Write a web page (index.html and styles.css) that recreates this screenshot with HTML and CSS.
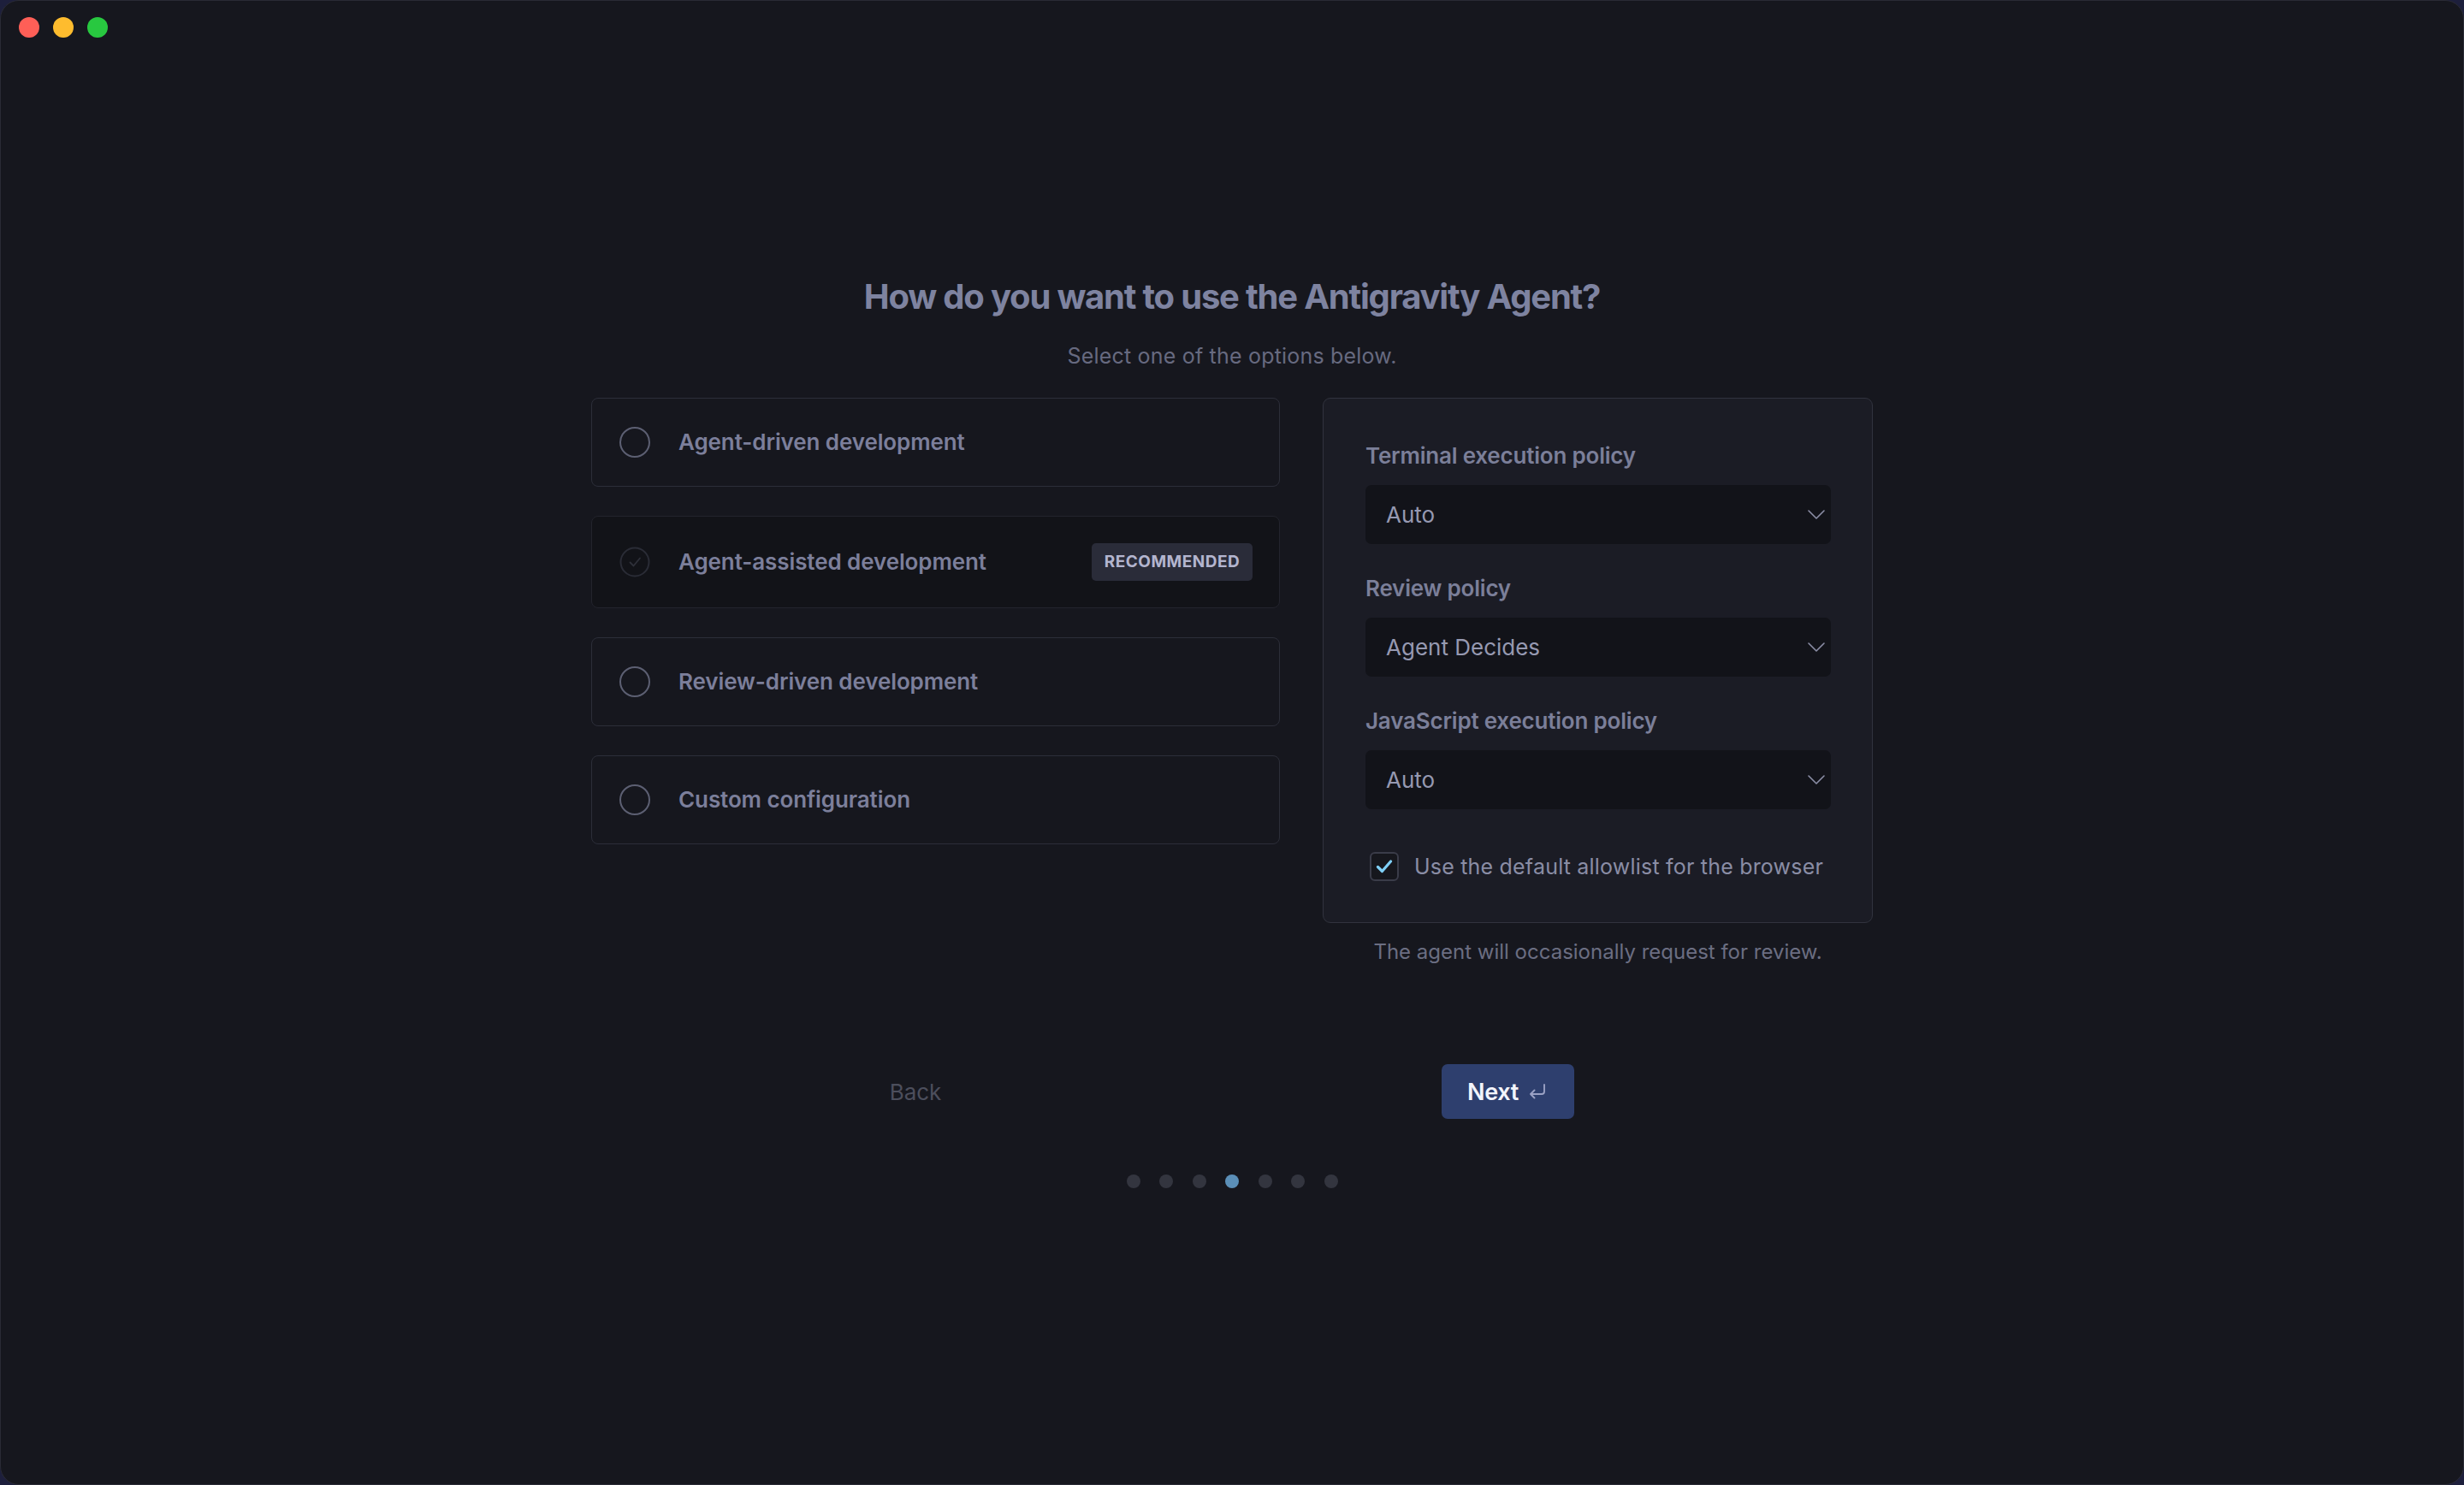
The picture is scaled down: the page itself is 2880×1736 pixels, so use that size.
FILE: index.html
```html
<!DOCTYPE html>
<html lang="en">
<head>
<meta charset="utf-8">
<title>Antigravity Agent</title>
<link rel="stylesheet" href="styles.css">
</head>
<body>
<div class="window">
  <div class="titlebar">
    <span class="light red"></span>
    <span class="light yellow"></span>
    <span class="light green"></span>
  </div>
  <main class="main">
    <h1 class="title">How do you want to use the Antigravity Agent?</h1>
    <p class="subtitle">Select one of the options below.</p>
    <div class="content">
      <div class="options">
        <div class="option">
          <span class="radio"></span>
          <span class="option-label">Agent-driven development</span>
        </div>
        <div class="option option-selected">
          <span class="radio radio-check">
            <svg viewBox="0 0 36 36" width="36" height="36"><circle cx="18" cy="18" r="16.5" fill="none" stroke="#2a2c36" stroke-width="2"/><path d="M12.5 18.5 l4 4 l7.5 -9" fill="none" stroke="#2e3039" stroke-width="1.8" stroke-linecap="round" stroke-linejoin="round"/></svg>
          </span>
          <span class="option-label">Agent-assisted development</span>
          <span class="badge">RECOMMENDED</span>
        </div>
        <div class="option">
          <span class="radio"></span>
          <span class="option-label">Review-driven development</span>
        </div>
        <div class="option">
          <span class="radio"></span>
          <span class="option-label">Custom configuration</span>
        </div>
      </div>
      <div class="side">
        <div class="panel">
          <div class="field">
            <div class="field-label">Terminal execution policy</div>
            <div class="select"><span>Auto</span><svg class="chev" viewBox="0 0 20 11" width="20" height="11"><path d="M1 1 L10 10 L19 1" fill="none" stroke="#8b8ea6" stroke-width="1.6" stroke-linecap="round" stroke-linejoin="round"/></svg></div>
          </div>
          <div class="field">
            <div class="field-label">Review policy</div>
            <div class="select"><span>Agent Decides</span><svg class="chev" viewBox="0 0 20 11" width="20" height="11"><path d="M1 1 L10 10 L19 1" fill="none" stroke="#8b8ea6" stroke-width="1.6" stroke-linecap="round" stroke-linejoin="round"/></svg></div>
          </div>
          <div class="field">
            <div class="field-label">JavaScript execution policy</div>
            <div class="select"><span>Auto</span><svg class="chev" viewBox="0 0 20 11" width="20" height="11"><path d="M1 1 L10 10 L19 1" fill="none" stroke="#8b8ea6" stroke-width="1.6" stroke-linecap="round" stroke-linejoin="round"/></svg></div>
          </div>
          <label class="check-row">
            <span class="checkbox"><svg viewBox="0 0 24 24" width="24" height="24"><path d="M4.5 12.5 L9.5 17.5 L19.5 6" fill="none" stroke="#7fd0f7" stroke-width="3.2" stroke-linecap="round" stroke-linejoin="round"/></svg></span>
            <span class="check-text">Use the default allowlist for the browser</span>
          </label>
        </div>
        <p class="helper">The agent will occasionally request for review.</p>
      </div>
    </div>
    <div class="actions">
      <button class="btn btn-back">Back</button>
      <button class="btn btn-next">Next<svg class="enter" viewBox="0 0 24 20" width="24" height="20"><path d="M20 2 V10 a3 3 0 0 1 -3 3 H4 M8.5 8.5 L4 13 L8.5 17.5" fill="none" stroke="#9aa1c4" stroke-width="1.9" stroke-linecap="round" stroke-linejoin="round"/></svg></button>
    </div>
    <div class="dots">
      <span class="dot"></span>
      <span class="dot"></span>
      <span class="dot"></span>
      <span class="dot dot-active"></span>
      <span class="dot"></span>
      <span class="dot"></span>
      <span class="dot"></span>
    </div>
  </main>
</div>
</body>
</html>
```

FILE: styles.css
```css
* { box-sizing: border-box; }

html, body {
  margin: 0;
  padding: 0;
  background: #1d1f3c;
}

body {
  font-family: Inter, "Noto Sans", "Liberation Sans", sans-serif;
  width: 2880px;
  height: 1736px;
  overflow: hidden;
}

.window {
  width: 2880px;
  height: 1736px;
  background: #16171e;
  border-radius: 22px;
  border: 1px solid #2a2b35;
  overflow: hidden;
}

.titlebar {
  display: flex;
  gap: 16px;
  padding: 19px 21px;
  height: 63px;
}

.light {
  width: 24px;
  height: 24px;
  border-radius: 50%;
  display: block;
}
.red { background: #fe5f57; }
.yellow { background: #febc2e; }
.green { background: #28c840; }

.main {
  display: flex;
  flex-direction: column;
  align-items: center;
  padding-top: 259px;
}

.title {
  margin: 0;
  font-size: 40px;
  line-height: 48px;
  font-weight: 700;
  letter-spacing: -1.2px;
  color: #7e83a0;
}

.subtitle {
  margin: 29px 0 0;
  font-size: 25px;
  line-height: 32px;
  font-weight: 400;
  letter-spacing: 0.2px;
  color: #676a80;
}

.content {
  margin-top: 33px;
  display: grid;
  grid-template-columns: 805px 643px;
  column-gap: 50px;
  align-items: start;
}

.options {
  display: flex;
  flex-direction: column;
  gap: 34px;
}

.option {
  display: flex;
  align-items: center;
  gap: 33px;
  padding: 31px 31px 31px 32px;
  border: 1px solid #2c2e39;
  border-radius: 8px;
  min-height: 104px;
}

.option-selected {
  background: #121318;
  border-color: #23242d;
}

.radio {
  width: 36px;
  height: 36px;
  border-radius: 50%;
  border: 2px solid #5c5f72;
  flex: none;
}

.radio-check {
  border: none;
  display: block;
}
.radio-check svg { display: block; }

.option-label {
  font-size: 26px;
  line-height: 40px;
  font-weight: 600;
  color: #7c7f9b;
  letter-spacing: -0.1px;
  flex: 1;
}

.badge {
  background: #2a2c39;
  color: #b3b5cf;
  font-size: 19px;
  font-weight: 700;
  letter-spacing: 0.5px;
  height: 44px;
  line-height: 44px;
  border-radius: 5px;
  width: 188px;
  text-align: center;
}

.side {
  display: flex;
  flex-direction: column;
}

.panel {
  background: #1b1c25;
  border: 1px solid #31333e;
  border-radius: 9px;
  padding: 49px 48px 48px 49px;
  display: flex;
  flex-direction: column;
  gap: 34px;
}

.field {
  display: flex;
  flex-direction: column;
  gap: 16px;
}

.field-label {
  font-size: 26px;
  line-height: 36px;
  font-weight: 600;
  color: #7b7f99;
  letter-spacing: -0.2px;
}

.select {
  height: 69px;
  background: #121319;
  border-radius: 7px;
  display: flex;
  align-items: center;
  justify-content: space-between;
  padding: 0 7px 0 24px;
  font-size: 26px;
  color: #9699b1;
}

.chev { display: block; }

.check-row {
  display: flex;
  align-items: center;
  gap: 18px;
  margin-top: 16px;
  padding-left: 5px;
  white-space: nowrap;
}

.checkbox {
  width: 34px;
  height: 34px;
  border: 2px solid #3a3c49;
  background: #16171d;
  border-radius: 6px;
  display: flex;
  align-items: center;
  justify-content: center;
  flex: none;
}
.checkbox svg { display: block; }

.check-text {
  font-size: 25px;
  line-height: 34px;
  letter-spacing: 0.2px;
  color: #8a8da5;
}

.helper {
  margin: 18px 0 0;
  text-align: center;
  font-size: 24px;
  line-height: 32px;
  color: #6b6e82;
}

.actions {
  margin-top: 115px;
  margin-right: 48px;
  width: 847px;
  display: flex;
  justify-content: space-between;
  align-items: center;
}

.btn {
  height: 64px;
  width: 155px;
  border: none;
  border-radius: 7px;
  font-family: Inter, "Noto Sans", "Liberation Sans", sans-serif;
  display: flex;
  align-items: center;
  justify-content: center;
  cursor: pointer;
}

.btn-back {
  background: transparent;
  color: #4c4e5c;
  font-size: 26px;
  font-weight: 400;
}

.btn-next {
  background: #2e3f6e;
  color: #f2f4fb;
  font-size: 27px;
  font-weight: 600;
  gap: 10px;
  letter-spacing: -0.3px;
}

.enter { display: block; }

.dots {
  margin-top: 65px;
  display: flex;
  gap: 22.5px;
}

.dot {
  width: 16px;
  height: 16px;
  border-radius: 50%;
  background: #33353f;
  display: block;
}

.dot-active { background: #5b8fb8; }
```
